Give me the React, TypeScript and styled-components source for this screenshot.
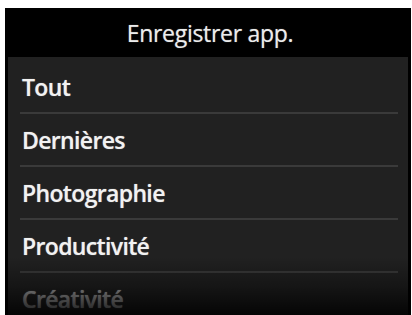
import React from "react";
import styled, { createGlobalStyle } from "styled-components";

const GlobalStyle = createGlobalStyle`
  html, body { margin: 0; padding: 0; background: #ffffff; }
  #root { width: 412px; height: 315px; overflow: hidden; }
`;

const Page = styled.div`
  width: 412px;
  height: 315px;
  padding: 8px 1px 0 5px;
  box-sizing: border-box;
  background: #ffffff;
`;

const Screen = styled.div`
  height: 100%;
  background: #000;
  display: flex;
  flex-direction: column;
  padding: 0 3px;
  box-sizing: border-box;
  font-family: "Open Sans", "DejaVu Sans", sans-serif;
`;

const TitleBar = styled.div`
  height: 49px;
  flex: none;
  display: flex;
  align-items: center;
  justify-content: center;
  padding-left: 4px;
  color: #ececec;
  font-size: 23px;
  font-weight: 500;
  letter-spacing: -0.3px;
  text-shadow: 0 0 1px rgba(255, 255, 255, 0.5);
`;

const List = styled.div`
  flex: 1;
  position: relative;
  overflow: hidden;
  background: #212121;
  padding-top: 4px;
`;

const Row = styled.div<{ $dim?: boolean }>`
  height: 51px;
  display: flex;
  align-items: center;
  padding-left: 14px;
  color: ${(p) => (p.$dim ? "#b0b0b0" : "#f2f2f2")};
  font-size: 23px;
  font-weight: 600;
  letter-spacing: -0.65px;
  text-shadow: 0 0 1px rgba(255, 255, 255, 0.55);
`;

const Separator = styled.div`
  height: 2px;
  margin: 0 10px 0 12px;
  background: #3a3a3a;
`;

const Fade = styled.div`
  position: absolute;
  left: 0;
  right: 0;
  bottom: 0;
  height: 58px;
  background: linear-gradient(to bottom, rgba(0, 0, 0, 0) 0%, rgba(0, 0, 0, 0.35) 50%, rgba(0, 0, 0, 0.85) 100%);
  pointer-events: none;
`;

const items = ["Tout", "Dernières", "Photographie", "Productivité", "Créativité"];

export default function App() {
  return (
    <>
      <GlobalStyle />
      <Page>
        <Screen>
          <TitleBar>Enregistrer app.</TitleBar>
          <List>
            {items.map((label, i) => (
              <React.Fragment key={label}>
                <Row $dim={i === items.length - 1}>{label}</Row>
                {i < items.length - 1 && <Separator />}
              </React.Fragment>
            ))}
            <Fade />
          </List>
        </Screen>
      </Page>
    </>
  );
}
